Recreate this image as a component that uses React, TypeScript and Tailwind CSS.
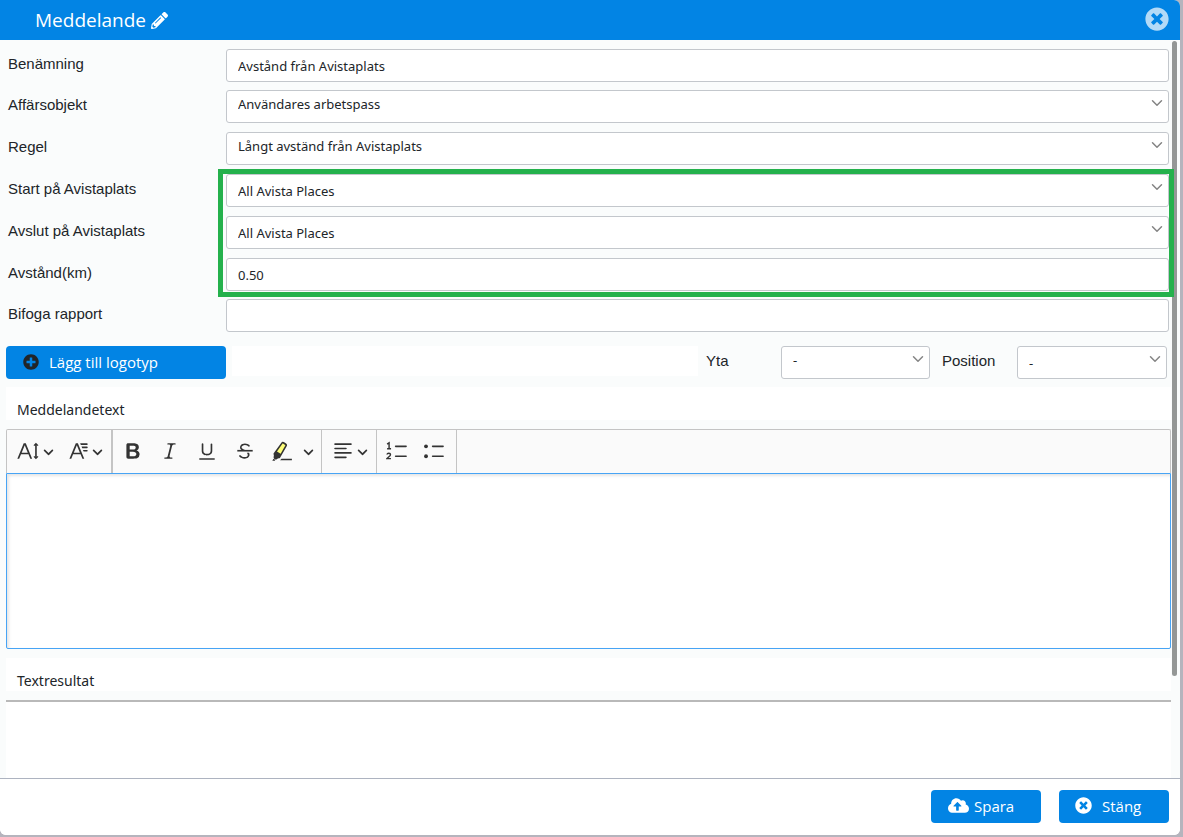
import type { ReactNode } from "react";
import { ChevronDown } from "lucide-react";
import { FaCloudUploadAlt, FaPencilAlt, FaPlusCircle, FaTimesCircle } from "react-icons/fa";

const UI_FONT = "font-['Open_Sans','Noto_Sans',sans-serif]";
const TEXT_FONT = "font-['Noto_Sans','Open_Sans',sans-serif]";
const LABEL_FONT = "font-['Liberation_Sans',Arial,sans-serif]";
const FIELD = `block h-[33px] w-full rounded-[3px] border border-[#c3c7cc] bg-white px-[11px] text-[13px] text-[#212529] outline-none ${TEXT_FONT}`;

interface FieldRowProps {
  id: string;
  label: string;
  children: ReactNode;
}

function FieldRow({ id, label, children }: FieldRowProps) {
  return (
    <div className="flex">
      <label htmlFor={id} className={`w-[220px] shrink-0 pl-0.5 pt-[5px] text-[15px] leading-5 ${LABEL_FONT}`}>
        {label}
      </label>
      <div className="flex-1">{children}</div>
    </div>
  );
}

interface SelectFieldProps {
  id: string;
  value: string;
  raised?: boolean;
}

function SelectField({ id, value, raised }: SelectFieldProps) {
  return (
    <div className="relative">
      <select id={id} className={`${FIELD} appearance-none ${raised ? "pb-1" : "pt-0.5"}`}>
        <option>{value}</option>
      </select>
      <ChevronDown className="pointer-events-none absolute right-[3px] top-1 h-[18px] w-[18px] text-[#858585]" strokeWidth={2} />
    </div>
  );
}

interface TextFieldProps {
  id: string;
  value?: string;
}

function TextField({ id, value }: TextFieldProps) {
  return <input id={id} type="text" defaultValue={value} className={FIELD} />;
}

interface ToolIconProps {
  children: ReactNode;
}

function ToolIcon({ children }: ToolIconProps) {
  return (
    <svg viewBox="0 0 20 20" className="h-[22px] w-[22px] shrink-0" fill="currentColor">
      {children}
    </svg>
  );
}

function ToolArrow() {
  return (
    <svg viewBox="0 0 10 10" className="h-[11px] w-[11px] shrink-0" fill="currentColor">
      <path d="M.941 4.523a.75.75 0 1 1 1.06-1.06l3.006 3.005 3.005-3.005a.75.75 0 1 1 1.06 1.06l-3.549 3.55a.75.75 0 0 1-1.168-.136L.941 4.523z" />
    </svg>
  );
}

interface ToolButtonProps {
  label: string;
  className?: string;
  children: ReactNode;
}

function ToolButton({ label, className = "w-[37px] justify-center", children }: ToolButtonProps) {
  return (
    <button type="button" aria-label={label} className={`flex h-full items-center pb-px ${className}`}>
      {children}
    </button>
  );
}

function EditorToolbar() {
  return (
    <div role="toolbar" aria-label="Textverktyg" className="flex h-11 rounded-t-[2px] border border-b-0 border-[#c4c4c4] bg-[#fafafa] text-[#333]">
      <div className="flex w-[106px] gap-3.5 border-r-2 border-[#c4c4c4] pl-2.5">
        <ToolButton label="Teckenstorlek" className="gap-1">
          <ToolIcon>
            <path d="M9.816 11.5 7.038 4.785 4.261 11.5h5.555Zm.62 1.5H3.641l-1.666 4.028H.312l5.789-14h1.875l5.789 14h-1.663L10.436 13Zm7.55 2.279.779-.779.707.707-2.265 2.265-2.193-2.265.707-.707.765.765V4.825c0-.042 0-.083.002-.123l-.77.77-.707-.707L17.207 2.5l2.265 2.265-.707.707-.782-.782c.002.043.003.089.003.135v10.454Z" />
          </ToolIcon>
          <ToolArrow />
        </ToolButton>
        <ToolButton label="Typsnitt" className="gap-0.5">
          <ToolIcon>
            <path d="M11.03 3h6.149a.75.75 0 1 1 0 1.5h-5.514L11.03 3zm1.27 3h4.879a.75.75 0 1 1 0 1.5h-4.244L12.3 6zm1.27 3h3.609a.75.75 0 1 1 0 1.5h-2.973L13.57 9zm-2.754 2.5L8.038 4.785 5.261 11.5h5.555zm.62 1.5H4.641l-1.666 4.028H1.312l5.789-14h1.875l5.789 14h-1.663L11.436 13z" />
          </ToolIcon>
          <ToolArrow />
        </ToolButton>
      </div>
      <div className="flex w-[209px] border-r border-[#c4c4c4] pl-px">
        <ToolButton label="Fet">
          <ToolIcon>
            <path d="M10.187 17H5.773c-.637 0-1.092-.138-1.364-.415-.273-.277-.409-.718-.409-1.323V4.738c0-.617.14-1.062.419-1.332.279-.27.73-.406 1.354-.406h4.68c.69 0 1.288.041 1.793.124.506.083.96.242 1.36.478.341.197.644.447.906.75a3.262 3.262 0 0 1 .808 2.162c0 1.401-.722 2.426-2.167 3.075C15.05 10.175 16 11.315 16 13.01a3.756 3.756 0 0 1-2.296 3.504 6.1 6.1 0 0 1-1.517.377c-.571.073-1.238.11-2 .11zm-.217-6.217H7v4.087h3.069c1.977 0 2.965-.69 2.965-2.072 0-.707-.256-1.22-.768-1.537-.512-.319-1.277-.478-2.296-.478zM7 5.13v3.619h2.606c.729 0 1.292-.067 1.69-.2a1.6 1.6 0 0 0 .91-.765c.165-.267.247-.566.247-.897 0-.707-.26-1.176-.778-1.409-.519-.232-1.31-.348-2.375-.348H7z" />
          </ToolIcon>
        </ToolButton>
        <ToolButton label="Kursiv">
          <ToolIcon>
            <path d="m9.586 14.633.021.004c-.036.335.095.655.393.962.082.083.173.15.274.201h1.474a.6.6 0 1 1 0 1.2H5.304a.6.6 0 0 1 0-1.2h1.15c.474-.07.809-.182 1.005-.334.157-.122.291-.32.404-.597l2.416-9.55a1.053 1.053 0 0 0-.281-.823 1.12 1.12 0 0 0-.442-.296H8.15a.6.6 0 0 1 0-1.2h6.443a.6.6 0 1 1 0 1.2h-1.195c-.376.056-.65.155-.823.296-.215.175-.423.439-.623.79l-2.366 9.347z" />
          </ToolIcon>
        </ToolButton>
        <ToolButton label="Understruken" className="w-[38px] justify-center">
          <ToolIcon>
            <path d="M3 18v-1.5h14V18H3zm2.2-8V3.6c0-.4.4-.6.8-.6.3 0 .7.2.7.6v6.2c0 2 1.3 2.8 3.2 2.8 1.9 0 3.4-.9 3.4-2.9V3.6c0-.3.4-.5.8-.5.3 0 .7.2.7.5V10c0 2.7-2.2 4-4.9 4-2.6 0-4.7-1.2-4.7-4z" />
          </ToolIcon>
        </ToolButton>
        <ToolButton label="Genomstruken">
          <ToolIcon>
            <path d="M7 16.4c-.8-.4-1.5-.9-2.2-1.5a.6.6 0 0 1-.2-.5l.3-.6h1c1 1.2 2.1 1.7 3.7 1.7 1 0 1.8-.3 2.3-.6.6-.4.6-1.2.6-1.3.2-1.2-.9-2.1-.9-2.1h2.1c.3.7.4 1.2.4 1.7v.8l-.6 1.2c-.6.8-1.1 1-1.6 1.2a6 6 0 0 1-2.4.6c-1 0-1.8-.3-2.5-.6zM6.8 9 6 8.3c-.4-.5-.5-.8-.5-1.6 0-.7.1-1.3.5-1.8.4-.6 1-1 1.6-1.3a6.3 6.3 0 0 1 4.7 0 4 4 0 0 1 1.7 1l.3.7c0 .1.2.4-.2.7-.4.2-.9.1-1 0a3 3 0 0 0-1.2-1c-.4-.2-1-.3-2-.4-.7 0-1.4.2-2 .6-.8.6-1 .8-1 1.5 0 .8.5 1 1.2 1.5.6.4 1.1.7 1.9 1H6.8z" />
            <path d="M3 10.5V9h14v1.5z" />
          </ToolIcon>
        </ToolButton>
        <ToolButton label="Markera" className="w-[38px] justify-center">
          <ToolIcon>
            <path fill="#fdfd77" d="M10.798 1.59 3.002 12.875l1.895 1.852 2.521 1.402 6.997-12.194z" />
            <path d="m2.556 16.727.234-.348c-.297-.151-.462-.293-.498-.426-.036-.137.002-.416.115-.837.094-.25.15-.449.169-.595a4.495 4.495 0 0 0 0-.725c-.209-.621-.303-1.041-.284-1.26.02-.218.178-.506.475-.862l6.77-9.414c.539-.91 1.605-.85 3.199.18 1.594 1.032 2.188 1.928 1.784 2.686l-5.877 10.36c-.158.412-.333.673-.526.782-.193.108-.604.179-1.232.21-.362.131-.608.237-.738.318-.13.081-.305.238-.526.47-.293.265-.504.397-.632.397-.096 0-.27-.075-.524-.226l-.31.41-1.6-1.12zm-.279.415 1.575 1.103-.392.515H1.19l1.087-1.618zm8.1-13.656-4.953 6.9L8.75 12.57l4.247-7.574c.175-.25-.188-.647-1.092-1.192-.903-.546-1.412-.652-1.528-.32zM8.244 18.5 9.59 17h9.406v1.5H8.245z" />
          </ToolIcon>
        </ToolButton>
        <ToolButton label="Markeringsfärger" className="w-3.5 justify-center">
          <ToolArrow />
        </ToolButton>
      </div>
      <div className="flex w-[55px] border-r border-[#c4c4c4] pl-2.5">
        <ToolButton label="Textjustering" className="gap-[3px]">
          <ToolIcon>
            <path d="M2 3.75c0 .414.336.75.75.75h14.5a.75.75 0 1 0 0-1.5H2.75a.75.75 0 0 0-.75.75zm0 8c0 .414.336.75.75.75h14.5a.75.75 0 1 0 0-1.5H2.75a.75.75 0 0 0-.75.75zm0 4c0 .414.336.75.75.75h9.929a.75.75 0 1 0 0-1.5H2.75a.75.75 0 0 0-.75.75zm0-8c0 .414.336.75.75.75h9.929a.75.75 0 1 0 0-1.5H2.75a.75.75 0 0 0-.75.75z" />
          </ToolIcon>
          <ToolArrow />
        </ToolButton>
      </div>
      <div className="flex w-20 border-r border-[#c4c4c4] pl-px">
        <ToolButton label="Numrerad lista">
          <ToolIcon>
            <path d="M7 5.75c0 .414.336.75.75.75h9.5a.75.75 0 1 0 0-1.5h-9.5a.75.75 0 0 0-.75.75zm0 9c0 .414.336.75.75.75h9.5a.75.75 0 1 0 0-1.5h-9.5a.75.75 0 0 0-.75.75z" transform="translate(1 0)" />
            <path fill="none" stroke="currentColor" strokeWidth="1.3" d="M1 3.8 2.8 2.6V8M1 8h3.6M.9 13.2c.2-1.6 3.2-1.6 3.2.1 0 1.2-2 2.2-3.2 3.6h3.6" />
          </ToolIcon>
        </ToolButton>
        <ToolButton label="Punktlista">
          <ToolIcon>
            <path d="M7 5.75c0 .414.336.75.75.75h9.5a.75.75 0 1 0 0-1.5h-9.5a.75.75 0 0 0-.75.75zm0 9c0 .414.336.75.75.75h9.5a.75.75 0 1 0 0-1.5h-9.5a.75.75 0 0 0-.75.75z" transform="translate(1 0)" />
            <circle cx="2.75" cy="5.75" r="1.75" />
            <circle cx="2.75" cy="14.75" r="1.75" />
          </ToolIcon>
        </ToolButton>
      </div>
    </div>
  );
}

export default function App() {
  return (
    <div className={`min-h-screen bg-[#b5b4bd] pb-0.5 pr-[3px] text-[#212529] ${UI_FONT}`}>
      <div className="flex h-[calc(100vh-2px)] flex-col overflow-hidden rounded-b-md rounded-tr-md bg-white">
        <header className="flex h-10 shrink-0 items-center bg-[#0284e4] pl-[35px] pr-[11px] text-white">
          <h1 className="text-[19px] leading-7">Meddelande</h1>
          <button type="button" aria-label="Redigera namn" className="ml-[5px]">
            <FaPencilAlt className="h-[17px] w-[17px]" />
          </button>
          <button type="button" aria-label="Stäng dialog" className="ml-auto pb-0.5">
            <FaTimesCircle className="h-6 w-6 text-[#b3daf7]" />
          </button>
        </header>

        <main className="flex min-h-0 flex-1 overflow-hidden bg-[#fafcfc]">
          <form className="flex flex-1 flex-col pl-1.5 pt-[9px]">
            <div className="flex flex-col gap-2 pr-0.5">
              <FieldRow id="benamning" label="Benämning">
                <TextField id="benamning" value="Avstånd från Avistaplats" />
              </FieldRow>
              <div className="flex flex-col gap-[9px]">
                <FieldRow id="affarsobjekt" label="Affärsobjekt">
                  <SelectField id="affarsobjekt" value="Användares arbetspass" raised />
                </FieldRow>
                <FieldRow id="regel" label="Regel">
                  <SelectField id="regel" value="Långt avständ från Avistaplats" raised />
                </FieldRow>
                <div className="relative flex flex-col gap-[9px]">
                  <FieldRow id="start" label="Start på Avistaplats">
                    <SelectField id="start" value="All Avista Places" />
                  </FieldRow>
                  <FieldRow id="avslut" label="Avslut på Avistaplats">
                    <SelectField id="avslut" value="All Avista Places" />
                  </FieldRow>
                  <FieldRow id="avstand" label="Avstånd(km)">
                    <TextField id="avstand" value="0.50" />
                  </FieldRow>
                  {/* highlight frame around the distance settings */}
                  <div className="pointer-events-none absolute -bottom-1.5 -right-[5px] -top-[5px] left-[212px] z-10 border-[5px] border-[#24b14c]" />
                </div>
              </div>
              <FieldRow id="rapport" label="Bifoga rapport">
                <TextField id="rapport" />
              </FieldRow>
            </div>

            <div className="mt-3.5 flex pr-1">
              <button type="button" className="flex h-[33px] w-[220px] items-center rounded bg-[#0284e4] pl-[17px] text-[15px] text-white">
                <FaPlusCircle className="mb-0.5 mr-2.5 h-4 w-4 text-[#212529]" />
                Lägg till logotyp
              </button>
              <div className="ml-1.5 h-[30px] flex-1 bg-white" />
              <label htmlFor="yta" className={`ml-2 w-[75px] pt-[5px] text-[15px] leading-5 ${LABEL_FONT}`}>
                Yta
              </label>
              <div className="w-[149px]">
                <SelectField id="yta" value="-" raised />
              </div>
              <label htmlFor="position" className={`ml-3 w-[75px] pt-[5px] text-[15px] leading-5 ${LABEL_FONT}`}>
                Position
              </label>
              <div className="w-[150px]">
                <SelectField id="position" value="-" />
              </div>
            </div>

            <label htmlFor="meddelandetext" className={`mt-2 h-[33px] bg-white pl-[11px] pt-[13px] text-sm leading-5 ${TEXT_FONT}`}>
              Meddelandetext
            </label>
            <div className="mt-[9px]">
              <EditorToolbar />
              <textarea
                id="meddelandetext"
                className="block h-44 w-full resize-none rounded-b-[2px] border border-[#47a4f5] bg-white p-2 text-sm shadow-[inset_2px_2px_3px_rgba(0,0,0,0.1)] outline-none"
              />
            </div>

            <label htmlFor="textresultat" className={`mt-[9px] h-[33px] bg-white pl-[11px] pt-[13px] text-sm leading-5 ${TEXT_FONT}`}>
              Textresultat
            </label>
            <textarea
              id="textresultat"
              readOnly
              className="mt-[9px] block w-full flex-1 resize-none border-t-2 border-[#b9b9b9] bg-white p-2 text-sm outline-none"
            />
          </form>
          <div className="ml-px mr-[3px] mt-px h-[635px] w-[5px] rounded-sm bg-[#949796]" />
        </main>

        <footer className="flex shrink-0 justify-end gap-[18px] border-t border-[#adb3c0] bg-white pb-3 pl-3 pr-[11px] pt-[11px] text-[15px] text-white">
          <button type="button" className="flex h-[33px] w-[110px] items-center rounded bg-[#0284e4] pl-[17px]">
            <FaCloudUploadAlt className="mb-0.5 mr-[5px] h-[17px] w-[21px]" />
            Spara
          </button>
          <button type="button" className="flex h-[33px] w-[110px] items-center rounded bg-[#0284e4] pl-4">
            <FaTimesCircle className="mb-0.5 mr-2.5 h-[17px] w-[17px]" />
            Stäng
          </button>
        </footer>
      </div>
    </div>
  );
}
